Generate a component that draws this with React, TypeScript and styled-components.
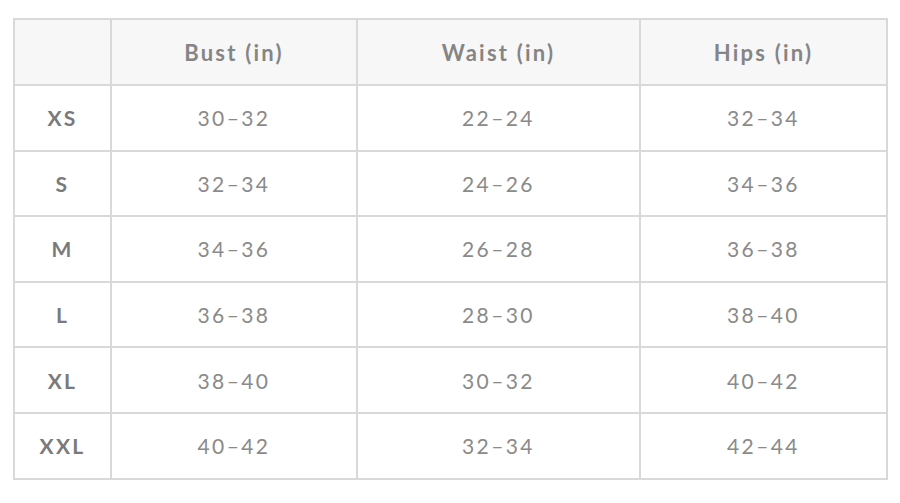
import styled, { createGlobalStyle } from "styled-components";

const GlobalStyle = createGlobalStyle`
  html, body {
    margin: 0;
    padding: 0;
    background: #ffffff;
  }
  body {
    font-family: "Lato", "Open Sans", sans-serif;
  }
`;

const Page = styled.div`
  padding: 18px 12px 0 13px;
`;

const Table = styled.table`
  width: 875px;
  border-collapse: collapse;
  table-layout: fixed;
  border: 2px solid #d9d9d9;
`;

const Col = styled.col<{ w: string }>`
  width: ${(p) => p.w};
`;

const HeadRow = styled.tr`
  background: #f7f7f7;
  height: 66px;
`;

const Row = styled.tr`
  height: 65.6px;
`;

const HeadCell = styled.th`
  border: 2px solid #d9d9d9;
  font-size: 22px;
  font-weight: 700;
  color: #858585;
  letter-spacing: 2.2px;
  text-align: center;
  padding: 0;
`;

const SizeCell = styled.td`
  border: 2px solid #d9d9d9;
  font-size: 21px;
  font-weight: 700;
  color: #7a7a7a;
  letter-spacing: 2.2px;
  text-align: center;
  padding: 0;
`;

const ValueCell = styled.td`
  border: 2px solid #d9d9d9;
  font-size: 21px;
  font-weight: 400;
  color: #8a8a8a;
  letter-spacing: 2.4px;
  text-align: center;
  padding: 0;
`;

const rows = [
  ["XS", "30-32", "22-24", "32-34"],
  ["S", "32-34", "24-26", "34-36"],
  ["M", "34-36", "26-28", "36-38"],
  ["L", "36-38", "28-30", "38-40"],
  ["XL", "38-40", "30-32", "40-42"],
  ["XXL", "40-42", "32-34", "42-44"],
];

export default function App() {
  return (
    <>
      <GlobalStyle />
      <Page>
        <Table>
          <colgroup>
            <Col w="11.1%" />
            <Col w="28.2%" />
            <Col w="32.4%" />
            <Col w="28.3%" />
          </colgroup>
          <thead>
            <HeadRow>
              <HeadCell />
              <HeadCell>Bust (in)</HeadCell>
              <HeadCell>Waist (in)</HeadCell>
              <HeadCell>Hips (in)</HeadCell>
            </HeadRow>
          </thead>
          <tbody>
            {rows.map((r) => (
              <Row key={r[0]}>
                <SizeCell>{r[0]}</SizeCell>
                <ValueCell>{r[1].replace("-", "–")}</ValueCell>
                <ValueCell>{r[2].replace("-", "–")}</ValueCell>
                <ValueCell>{r[3].replace("-", "–")}</ValueCell>
              </Row>
            ))}
          </tbody>
        </Table>
      </Page>
    </>
  );
}
